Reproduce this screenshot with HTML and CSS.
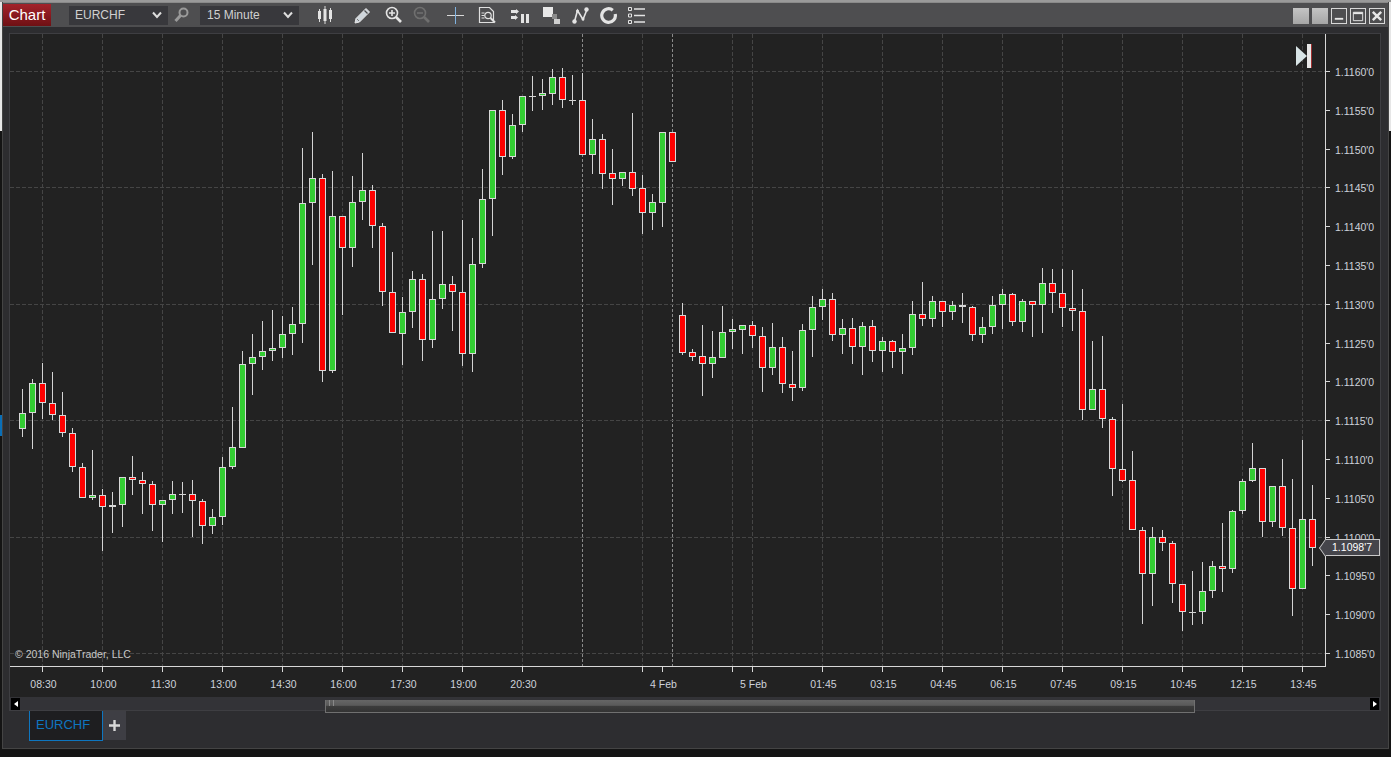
FILE: index.html
```html
<!DOCTYPE html>
<html lang="en">
<head>
    <meta charset="UTF-8">
    <title>Chart - EURCHF</title>
    <link rel="stylesheet" href="styles.css">
</head>
<body>
    <div class="window">
        <div class="toolbar">
            <div class="app-button">Chart</div>
            <div class="select select-instrument">EURCHF
                <svg class="chevron" width="10" height="8" viewBox="0 0 10 8"><path d="M1 1.500l4 4.500 4-4.500" fill="none" stroke="#ddd" stroke-width="2"/></svg>
            </div>
            <svg class="tool tool-search" width="15" height="16" viewBox="0 0 15 16"><circle cx="9.500" cy="5.500" r="4" fill="none" stroke="#9a9a9a" stroke-width="2"/><path d="M6.500 8.500L1.500 14" stroke="#9a9a9a" stroke-width="3"/></svg>
            <div class="select select-interval">15 Minute
                <svg class="chevron" width="10" height="8" viewBox="0 0 10 8"><path d="M1 1.500l4 4.500 4-4.500" fill="none" stroke="#ddd" stroke-width="2"/></svg>
            </div>

            <svg class="tool tool-candles" width="16" height="18" viewBox="0 0 16 18"><path d="M2.500 3v13M8 0v18M13.500 2v14" stroke="#ddd"/><rect x="1" y="5" width="3" height="8" fill="#e4e4e4"/><rect x="6.500" y="3" width="3" height="12" fill="#e4e4e4"/><rect x="12" y="4" width="3" height="9" fill="#e4e4e4"/></svg>
            <svg class="tool tool-pencil" width="17" height="17" viewBox="0 0 17 17"><path d="M12 1.500l3.500 3.500L5.500 15 1 16l1-4.500z" fill="#cfd6dc" stroke="#e6e6e6"/><path d="M10.500 3.500l3 3" stroke="#4d4d4d" stroke-width="1.200"/><path d="M3 12l2 2" stroke="#777"/></svg>
            <svg class="tool tool-zoomin" width="17" height="18" viewBox="0 0 17 18"><circle cx="7" cy="7" r="5.500" fill="none" stroke="#e4e4e4" stroke-width="1.600"/><path d="M4 7h6M7 4v6" stroke="#e4e4e4" stroke-width="1.600"/><path d="M11 11l5 5" stroke="#e4e4e4" stroke-width="2.600"/></svg>
            <svg class="tool tool-zoomout" width="17" height="18" viewBox="0 0 17 18"><circle cx="7" cy="7" r="5.500" fill="none" stroke="#6f6f6f" stroke-width="1.600"/><path d="M4 7h6" stroke="#6f6f6f" stroke-width="1.600"/><path d="M11 11l5 5" stroke="#6f6f6f" stroke-width="2.600"/></svg>
            <svg class="tool tool-cross" width="17" height="17" viewBox="0 0 17 17"><path d="M0 8.500h17" stroke="#d8d8d8"/><path d="M8.500 0v17" stroke="#7fb2e0"/></svg>
            <svg class="tool tool-doc" width="18" height="18" viewBox="0 0 18 18"><path d="M1.500 1.500h10l4 4v11h-14z" fill="none" stroke="#e0e0e0" stroke-width="1.200"/><circle cx="10" cy="9.500" r="3.200" fill="none" stroke="#e0e0e0" stroke-width="1.200"/><path d="M12.500 12l4.500 4.500" stroke="#e0e0e0" stroke-width="2"/><path d="M3.500 7h3M3.500 9.500h3M3.500 12h3" stroke="#e0e0e0"/></svg>
            <svg class="tool tool-bars" width="18" height="15" viewBox="0 0 18 15"><path d="M0 2h6v3H0zM0 8h5v3H0z" fill="#e4e4e4"/><path d="M5 1l3 2.500-3 2.500zM4 7l3 2.500L4 12z" fill="#e4e4e4"/><rect x="10" y="6" width="3" height="9" fill="#e4e4e4"/><rect x="15" y="6" width="3" height="9" fill="#e4e4e4"/></svg>
            <svg class="tool tool-squares" width="17" height="17" viewBox="0 0 17 17"><rect x="0" y="0" width="10" height="10" fill="#e8e8e8"/><rect x="9" y="7" width="5" height="5" fill="#8c8c8c"/><rect x="11" y="12" width="6" height="5" fill="#cfcfcf"/></svg>
            <svg class="tool tool-nodes" width="17" height="17" viewBox="0 0 17 17"><path d="M2.500 14.500L5.500 3.500l5.500 9 4-10" fill="none" stroke="#e4e4e4" stroke-width="1.600"/><circle cx="2.500" cy="14.500" r="2.200" fill="#e4e4e4"/><circle cx="5.500" cy="4" r="1.500" fill="#e4e4e4"/><circle cx="11" cy="12" r="1.500" fill="#e4e4e4"/><circle cx="14.500" cy="2.500" r="2.200" fill="#e4e4e4"/></svg>
            <svg class="tool tool-circle" width="17" height="17" viewBox="0 0 17 17"><path d="M12.800 3.200A6.800 6.800 0 1 0 15.200 7" fill="none" stroke="#e4e4e4" stroke-width="3.200"/></svg>
            <svg class="tool tool-list" width="17" height="17" viewBox="0 0 17 17"><path d="M.5.500h3v3h-3zM.5 7h3v3h-3zM.5 13.500h3v3h-3z" fill="none" stroke="#e4e4e4"/><path d="M6 2h11M6 8.500h11M6 15h11" stroke="#e4e4e4" stroke-width="1.600"/></svg>

            <div class="window-buttons">
                <div class="win-btn win-plain"></div>
                <div class="win-btn win-plain"></div>
                <div class="win-btn win-line"><svg width="15" height="15" viewBox="0 0 15 15"><path d="M3 10.500h9" stroke="#e8e8e8" stroke-width="2"/></svg></div>
                <div class="win-btn win-line"><svg width="15" height="15" viewBox="0 0 15 15"><path d="M2.500 3.500h10v9h-10z" fill="none" stroke="#e8e8e8"/><path d="M2.500 4.500h10" stroke="#e8e8e8" stroke-width="2"/></svg></div>
                <div class="win-btn win-line"><svg width="15" height="15" viewBox="0 0 15 15"><path d="M3 3l9 9M12 3l-9 9" stroke="#e8e8e8" stroke-width="2.600"/></svg></div>
            </div>
        </div>

        <div class="chart-panel">
            <div class="plot" id="plot">
                <svg class="jump-end" width="16" height="24" viewBox="0 0 16 24"><path d="M0 2l11 10L0 22z" fill="#d8e4e6"/><rect x="11" y="0" width="5" height="24" fill="#e8e8e8"/><rect x="15" y="0" width="1" height="24" fill="#a03030"/></svg>
                <div class="copyright">&copy; 2016 NinjaTrader, LLC</div>
                <div class="last-price">1.1098'7</div>
            </div>
            <div class="scrollbar">
                <div class="scroll-arrow"><svg width="4" height="6" viewBox="0 0 4 6"><path d="M4 0v6L0 3z" fill="#fff"/></svg></div>
                <div class="scroll-track">
                    <div class="scroll-thumb"><span class="grip"></span></div>
                </div>
                <div class="scroll-arrow"><svg width="4" height="6" viewBox="0 0 4 6"><path d="M0 0v6l4-3z" fill="#fff"/></svg></div>
            </div>
        </div>

        <div class="tabs">
            <div class="tab">EURCHF</div>
            <div class="tab-add"><svg width="11" height="11" viewBox="0 0 11 11"><path d="M5.500 0v11M0 5.500h11" stroke="#d8d8d8" stroke-width="2.400"/></svg></div>
        </div>
    </div>

    <script src="chart.js"></script>
</body>
</html>
```

FILE: styles.css
```css
/* General Styles */
body {
    margin: 0;
    height: 757px;
    overflow: hidden;
    font-family: "Liberation Sans", Arial, sans-serif;
    background: linear-gradient(#0a6fb8, #0a6fb8) left 415px / 2px 21px no-repeat,
                linear-gradient(#9a9a9a 2px, #e6e6e6 2px, #e6e6e6 131px, #141414 131px);
}

.window {
    margin: 2px 2px 0 2px;
    height: 747px;
    box-sizing: border-box;
    background: #2d2d30;
    border-bottom: 1px solid #444;
    border-right: 1px solid #444;
    border-left: 1px solid #444;
    display: flex;
    flex-direction: column;
}

/* Toolbar */
.toolbar {
    height: 24px;
    flex: none;
    background: #4e4e50;
    border-top: 1px solid #8a8a8a;
    display: flex;
    align-items: center;
}

.app-button {
    width: 48px;
    height: 22px;
    line-height: 22px;
    text-align: center;
    color: #fff;
    font-size: 15px;
    background: linear-gradient(#a3232b, #6f1014);
}

.select {
    height: 19px;
    box-sizing: border-box;
    width: 99px;
    padding: 0 6px 0 7px;
    background: #38383c;
    color: #d0d0d0;
    font-size: 12px;
    line-height: 19px;
    display: flex;
    align-items: center;
    justify-content: space-between;
}

.select-instrument { margin-left: 18px; padding-left: 6px; }
.select-interval { margin-left: 11px; }

.tool { flex: none; display: block; }
.tool-search { margin-left: 6px; }
.tool-candles { margin-left: 18px; }
.tool-pencil { margin-left: 21px; }
.tool-zoomin { margin-left: 14px; }
.tool-zoomout { margin-left: 11px; }
.tool-cross { margin-left: 17px; }
.tool-doc { margin-left: 14px; }
.tool-bars { margin-left: 15px; }
.tool-squares { margin-left: 14px; }
.tool-nodes { margin-left: 12px; }
.tool-circle { margin-left: 11px; }
.tool-list { margin-left: 11px; }

.window-buttons {
    margin-left: auto;
    margin-right: 3px;
    margin-top: 1px;
    display: flex;
    gap: 3px;
}

.win-btn {
    width: 16px;
    height: 16px;
    box-sizing: border-box;
}

.win-plain { background: linear-gradient(#c4c4c4, #a6a6a6); }
.win-line { border: 1px solid #d8d8d8; }
.win-line svg { display: block; width: 14px; height: 14px; }

/* Chart */
.chart-panel {
    margin: 6px 7px 0 6px;
    height: 678px;
    flex: none;
    box-sizing: border-box;
    border: 1px solid #3e3e42;
    background: #222;
    display: flex;
    flex-direction: column;
}

.plot {
    position: relative;
    height: 663px;
    flex: none;
}

.plot > svg.chart {
    display: block;
}

.plot text {
    font-family: "Liberation Sans", Arial, sans-serif;
    font-size: 10.500px;
    fill: #ced2da;
}

.jump-end {
    position: absolute;
    left: 1286px;
    top: 10px;
}

.copyright {
    position: absolute;
    left: 5px;
    top: 614px;
    font-size: 10.500px;
    color: #c8c8c8;
}

.last-price {
    position: absolute;
    left: 1315px;
    top: 505px;
    width: 55px;
    height: 17px;
    box-sizing: border-box;
    border: 1px solid #c8c8c8;
    border-left: none;
    background: #45454b;
    color: #fff;
    font-size: 10.500px;
    line-height: 15px;
    text-align: right;
    padding-right: 7px;
}

.last-price::before {
    content: "";
    position: absolute;
    left: -6px;
    top: 1.500px;
    width: 12px;
    height: 12px;
    box-sizing: border-box;
    background: #45454b;
    border-left: 1px solid #c8c8c8;
    border-bottom: 1px solid #c8c8c8;
    transform: scaleX(.7) rotate(45deg);
}

/* Scrollbar */
.scrollbar {
    height: 13px;
    flex: none;
    background: #333337;
    display: flex;
    align-items: center;
}

.scroll-arrow {
    width: 9px;
    height: 12px;
    margin: 0 1px;
    background: #000;
    display: flex;
    align-items: center;
    justify-content: center;
}

.scroll-track {
    flex: 1;
    height: 13px;
    padding-left: 304px;
    padding-right: 174px;
}

.scroll-thumb {
    height: 13px;
    box-sizing: border-box;
    border: 1px solid #707070;
    border-top: none;
    background: linear-gradient(#666 0, #5a5a5a 45%, #3c3c3c 50%, #333 100%);
}

.grip {
    display: block;
    width: 3px;
    height: 6px;
    margin: 3px 0 0 3px;
    border-left: 1px solid #888;
    border-right: 1px solid #888;
}

/* Tabs */
.tabs {
    margin-left: 26px;
    display: flex;
}

.tab {
    width: 74px;
    height: 30px;
    box-sizing: border-box;
    border: 1px solid #0e76c0;
    border-top: none;
    background: #1e1e20;
    color: #0e76c0;
    font-size: 13px;
    line-height: 28px;
    padding-left: 6px;
}

.tab-add {
    width: 23px;
    height: 29px;
    background: #3e3e44;
    display: flex;
    align-items: center;
    justify-content: center;
}
```

FILE: chart.js
```js
// [wick top, wick bottom, body top, body bottom, "g", "r" or "d" for a doji] in page y
const candles = [
    [389, 437, 413, 429, "g"], [379, 449, 383, 413, "g"], [363, 419, 383, 403, "r"], [372, 420, 403, 415, "r"],
    [392, 437, 415, 433, "r"], [428, 472, 433, 467, "r"], [463, 498, 467, 498, "r"], [450, 500, 495, 498, "g"],
    [489, 551, 495, 507, "r"], [492, 533, 505, 507, "g"], [477, 527, 477, 505, "g"], [456, 495, 477, 480, "r"],
    [472, 514, 480, 484, "r"], [481, 531, 484, 505, "r"], [500, 542, 500, 505, "g"], [481, 514, 494, 500, "g"],
    [482, 513, 494, 494, "d"], [480, 537, 494, 501, "r"], [499, 544, 501, 526, "r"], [509, 534, 517, 526, "g"],
    [457, 525, 467, 517, "g"], [407, 469, 447, 467, "g"], [351, 448, 364, 448, "g"], [334, 395, 357, 364, "g"],
    [321, 370, 351, 357, "g"], [310, 361, 348, 351, "g"], [316, 358, 334, 348, "g"], [307, 355, 324, 334, "g"],
    [148, 343, 203, 324, "g"], [132, 265, 178, 203, "g"], [174, 382, 178, 371, "r"], [171, 373, 216, 371, "g"],
    [216, 315, 216, 248, "r"], [176, 267, 202, 248, "g"], [153, 220, 190, 202, "g"], [185, 248, 190, 226, "r"],
    [223, 306, 226, 292, "r"], [252, 333, 292, 333, "r"], [297, 365, 312, 334, "g"], [271, 328, 279, 312, "g"],
    [274, 361, 279, 340, "r"], [231, 348, 299, 340, "g"], [231, 309, 284, 299, "g"], [276, 331, 284, 292, "r"],
    [220, 366, 292, 354, "r"], [238, 372, 264, 354, "g"], [169, 268, 199, 264, "g"], [110, 236, 110, 199, "g"],
    [100, 175, 110, 157, "r"], [114, 159, 125, 157, "g"], [96, 132, 96, 125, "g"], [76, 111, 96, 96, "d"],
    [79, 110, 93, 96, "g"], [69, 105, 77, 94, "g"], [68, 108, 77, 100, "r"], [75, 105, 100, 100, "d"],
    [73, 155, 100, 155, "r"], [119, 174, 139, 155, "g"], [134, 189, 139, 174, "r"], [149, 205, 173, 179, "r"],
    [172, 186, 172, 179, "g"], [113, 196, 172, 189, "r"], [175, 234, 188, 213, "r"], [194, 230, 202, 213, "g"],
    [132, 227, 132, 203, "g"], [132, 162, 132, 162, "r"], [303, 355, 315, 353, "r"], [349, 361, 352, 357, "r"],
    [325, 396, 356, 364, "r"], [331, 378, 357, 364, "g"], [306, 358, 332, 358, "g"], [319, 349, 329, 332, "g"],
    [325, 354, 325, 330, "g"], [321, 348, 325, 336, "r"], [327, 392, 336, 368, "r"], [323, 375, 347, 368, "g"],
    [337, 393, 347, 384, "r"], [351, 401, 384, 388, "r"], [324, 391, 330, 388, "g"], [296, 357, 307, 330, "g"],
    [289, 320, 299, 307, "g"], [293, 341, 299, 335, "r"], [319, 354, 328, 335, "g"], [318, 364, 328, 347, "r"],
    [322, 375, 326, 347, "g"], [320, 362, 326, 351, "r"], [337, 372, 341, 351, "g"], [340, 368, 341, 352, "r"],
    [334, 374, 348, 352, "g"], [301, 355, 314, 348, "g"], [282, 326, 314, 319, "r"], [296, 327, 301, 319, "g"],
    [301, 327, 301, 312, "r"], [301, 320, 305, 312, "g"], [293, 323, 305, 307, "r"], [306, 341, 307, 335, "r"],
    [317, 343, 327, 335, "g"], [296, 334, 305, 327, "g"], [289, 329, 294, 305, "g"], [293, 326, 294, 322, "r"],
    [299, 332, 301, 322, "g"], [301, 337, 301, 305, "r"], [268, 333, 283, 305, "g"], [269, 313, 283, 293, "r"],
    [269, 327, 293, 308, "r"], [270, 331, 308, 311, "r"], [289, 420, 311, 410, "r"], [341, 410, 389, 410, "g"],
    [336, 428, 389, 419, "r"], [417, 496, 419, 469, "r"], [404, 482, 469, 481, "r"], [451, 530, 480, 530, "r"],
    [527, 624, 530, 574, "r"], [527, 606, 537, 574, "g"], [530, 551, 537, 543, "r"], [541, 603, 543, 584, "r"],
    [584, 631, 584, 612, "r"], [571, 625, 612, 612, "d"], [562, 624, 591, 612, "g"], [561, 598, 566, 591, "g"],
    [523, 592, 566, 569, "r"], [510, 573, 511, 569, "g"], [479, 514, 481, 511, "g"], [443, 482, 468, 481, "g"],
    [468, 537, 468, 522, "r"], [486, 527, 486, 522, "g"], [459, 536, 486, 528, "r"], [479, 616, 528, 589, "r"],
    [440, 589, 519, 589, "g"], [485, 566, 519, 548, "r"]
];

// candles start at x=22, one every 10px
const FIRST_X = 22;
const STEP = 10;

// offsets from page coordinates to the svg
const OX = 10;
const OY = 34;

const WIDTH = 1371;
const HEIGHT = 663;
const AXIS_X = 1325 - OX;
const AXIS_Y = 666 - OY;

const timeLabels = [
    ["08:30", 42], ["10:00", 102], ["11:30", 162], ["13:00", 222], ["14:30", 282], ["16:00", 342],
    ["17:30", 402], ["19:00", 462], ["20:30", 522], ["4 Feb", 662], ["5 Feb", 752], ["01:45", 822],
    ["03:15", 882], ["04:45", 942], ["06:15", 1002], ["07:45", 1062], ["09:15", 1122], ["10:45", 1182],
    ["12:15", 1242], ["13:45", 1302]
];
const tickXs = timeLabels.map((l) => l[1]).concat([642, 732]);
const gridXs = [42, 102, 162, 222, 282, 342, 402, 462, 522, 642, 732, 752, 822, 882, 942, 1002, 1062, 1122, 1182, 1242, 1302];
const sessionXs = [582, 672];

let svg = "";

function line(x1, y1, x2, y2, style) {
    svg += `<line x1="${x1}" y1="${y1}" x2="${x2}" y2="${y2}" stroke="${style.color}"` +
        (style.dash ? ` stroke-dasharray="${style.dash}"` : "") + "/>";
}

const gridStyle = { color: "#454545", dash: "4 2" };
const sessionStyle = { color: "#8a8a8a", dash: "3 2" };
const axisStyle = { color: "#d8d8d8" };
const wickStyle = { color: "#d4d4d4" };

// vertical grid
gridXs.forEach((x) => line(x - OX + 0.5, 0, x - OX + 0.5, AXIS_Y, gridStyle));
sessionXs.forEach((x) => line(x - OX + 0.5, 0, x - OX + 0.5, AXIS_Y, sessionStyle));

// price scale: ticks every 5 pips, a grid line on every third one
for (let i = 0; i < 16; i++) {
    const y = Math.round(71 + i * 38.8) - OY + 0.5;
    const pips = 1160 - i * 5;
    if (i % 3 === 0) {
        line(0, y, AXIS_X, y, gridStyle);
    }
    line(AXIS_X, y, AXIS_X + 5, y, axisStyle);
    svg += `<text x="${AXIS_X + 10}" y="${y + 4}">1.${pips}'0</text>`;
}

// candles
candles.forEach((c, i) => {
    const x = FIRST_X + i * STEP - OX;
    const [hi, lo, top, bottom, kind] = c;
    line(x + 0.5, hi - OY, x + 0.5, lo - OY, wickStyle);
    if (kind === "d") {
        line(x - 3, top - OY + 0.5, x + 4, top - OY + 0.5, wickStyle);
    } else {
        const fill = kind === "g" ? "#32cd32" : "#ff0000";
        svg += `<rect x="${x - 2.5}" y="${top - OY + 0.5}" width="6" height="${bottom - top - 1}" fill="${fill}" stroke="#d8d8d8"/>`;
    }
});

// axes go on top
line(AXIS_X + 0.5, 0, AXIS_X + 0.5, AXIS_Y + 1, axisStyle);
line(0, AXIS_Y + 0.5, AXIS_X + 1, AXIS_Y + 0.5, axisStyle);
tickXs.forEach((x) => line(x - OX + 0.5, AXIS_Y, x - OX + 0.5, AXIS_Y + 6, axisStyle));
timeLabels.forEach(([label, x]) => {
    svg += `<text x="${x - OX + 1.5}" y="${AXIS_Y + 22}" text-anchor="middle">${label}</text>`;
});

document.getElementById("plot").insertAdjacentHTML("afterbegin",
    `<svg class="chart" width="${WIDTH}" height="${HEIGHT}" viewBox="0 0 ${WIDTH} ${HEIGHT}">${svg}</svg>`);
```
